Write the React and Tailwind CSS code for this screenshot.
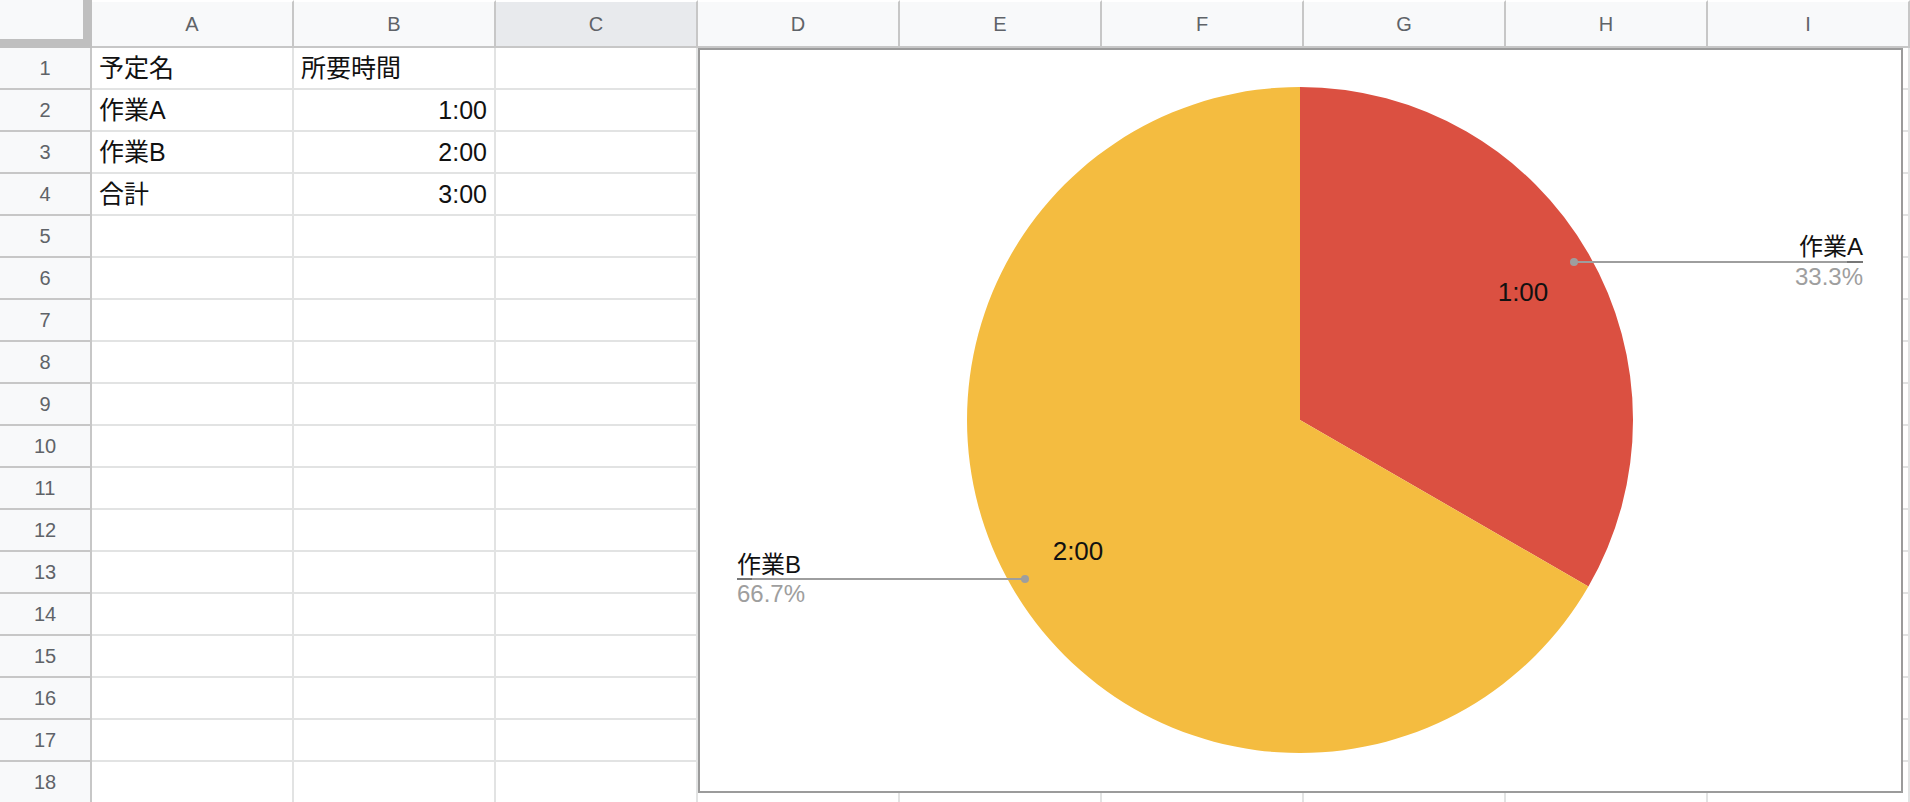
import React from 'react';

const cols = ['A', 'B', 'C', 'D', 'E', 'F', 'G', 'H', 'I'];

const data = {
  1: ['予定名', '所要時間'],
  2: ['作業A', '1:00'],
  3: ['作業B', '2:00'],
  4: ['合計', '3:00'],
};

const rows = Array.from({ length: 18 }, (_, i) => i + 1);

const PieChart = () => (
  <div className="absolute left-[698px] top-[48px] w-[1205px] h-[745px] border-2 border-[#9b9b9b] bg-white">
    <svg width="1201" height="741" viewBox="0 0 1201 741" className="block">
      {/* red slice 33.3% */}
      <path d="M600,370 L600,37 A333,333 0 0 1 888.4,536.5 Z" fill="#db5041" />
      {/* yellow slice 66.7% */}
      <path d="M600,370 L888.4,536.5 A333,333 0 1 1 600,37 Z" fill="#f4bc40" />

      <text x="823" y="251" fontSize="26" textAnchor="middle" fill="#111">1:00</text>
      <text x="378" y="510" fontSize="26" textAnchor="middle" fill="#111">2:00</text>

      {/* leader A */}
      <line x1="874" y1="212" x2="1163" y2="212" stroke="#9e9e9e" strokeWidth="2" />
      <line x1="1147" y1="212" x2="1163" y2="212" stroke="#777" strokeWidth="2" />
      <circle cx="874" cy="212" r="4" fill="#9e9e9e" />
      <text x="1163" y="205" fontSize="24" textAnchor="end" fill="#111">作業A</text>
      <text x="1163" y="235" fontSize="24" textAnchor="end" fill="#9e9e9e">33.3%</text>

      {/* leader B */}
      <line x1="37" y1="529" x2="325" y2="529" stroke="#9e9e9e" strokeWidth="2" />
      <line x1="37" y1="529" x2="52" y2="529" stroke="#777" strokeWidth="2" />
      <circle cx="325" cy="529" r="4" fill="#9e9e9e" />
      <text x="37" y="523" fontSize="24" fill="#111">作業B</text>
      <text x="37" y="552" fontSize="24" fill="#9e9e9e">66.7%</text>
    </svg>
  </div>
);

const App = () => (
  <div className="relative w-[1910px] h-[802px] overflow-hidden bg-white [font-family:'Liberation_Sans','Noto_Sans_CJK_JP',sans-serif]">
    {/* column headers */}
    <div className="flex h-[48px]">
      <div className="w-[92px] h-[48px] shrink-0 bg-[#f8f9fa] border-r-[9px] border-b-[9px] border-[#bfbfbf]" />
      {cols.map((c) => (
        <div
          key={c}
          className={`w-[202px] h-[48px] shrink-0 flex items-center justify-center border-t-2 border-t-white border-r-2 border-b-2 border-[#c7c7c7] text-[20px] text-[#5f6368] ${c === 'C' ? 'bg-[#e8eaed]' : 'bg-[#f8f9fa]'}`}
        >
          {c}
        </div>
      ))}
    </div>

    {/* rows */}
    {rows.map((r) => (
      <div key={r} className="flex h-[42px]">
        <div className="w-[92px] h-[42px] shrink-0 flex items-center justify-center bg-[#f8f9fa] border-r-2 border-b-2 border-[#c7c7c7] text-[20px] text-[#5f6368]">
          {r}
        </div>
        {cols.map((c, ci) => {
          const v = data[r] && data[r][ci];
          const right = ci === 1 && r > 1;
          return (
            <div
              key={c}
              className={`w-[202px] h-[42px] shrink-0 flex items-center px-[7px] pt-[2px] border-r-2 border-b-2 border-[#e2e3e3] text-[25px] text-[#111] whitespace-nowrap ${right ? 'justify-end' : ''}`}
            >
              {v || ''}
            </div>
          );
        })}
      </div>
    ))}

    <PieChart />
  </div>
);

export default App;
